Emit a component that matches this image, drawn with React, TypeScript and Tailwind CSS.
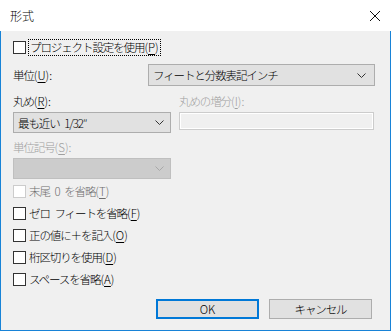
import React from "react";

const font = { fontFamily: '"Noto Sans CJK JP", "Noto Sans", sans-serif' };

const Key = ({ k }: { k: string }) => (
  <span className="tracking-[0px]">
    (<span className="underline underline-offset-[2px]">{k}</span>)
  </span>
);

const Chevron = ({ color = "#333" }: { color?: string }) => (
  <svg width="9" height="5" viewBox="0 0 9 5" className="shrink-0">
    <path d="M0.5 0.5 L4.5 4.5 L8.5 0.5" fill="none" stroke={color} strokeWidth="1" />
  </svg>
);

const Check = ({ disabled = false }: { disabled?: boolean }) => (
  <span
    className={
      "w-[13px] h-[13px] shrink-0 border bg-white " +
      (disabled ? "border-[#cccccc]" : "border-[#333333]")
    }
  />
);

const CheckRow = ({ label, k, disabled = false }: { label: string; k: string; disabled?: boolean }) => (
  <div className="h-[22px] flex items-center gap-[3px]">
    <Check disabled={disabled} />
    <span className={disabled ? "text-[#6d6d6d]" : "text-black"}>
      {label}
      <Key k={k} />
    </span>
  </div>
);

export default function App() {
  return (
    <div className="w-[391px] h-[331px] flex flex-col bg-[#f0f0f0] text-[11.5px] leading-[14px] text-black tracking-[-1.1px] font-light" style={font}>
      {/* title bar */}
      <div className="h-[31px] shrink-0 bg-white flex items-center justify-between pl-[10px] pr-[6px]">
        <span className="text-[12px] tracking-normal">形式</span>
        <svg width="10" height="10" viewBox="0 0 10 10" className="mr-[5px]">
          <path d="M0 0 L10 10 M10 0 L0 10" stroke="#111" strokeWidth="1" />
        </svg>
      </div>

      <div className="flex-1 flex flex-col border-x border-b border-[#1883d7] pl-[12px] pr-[15px] pt-[8px]">
        {/* project setting */}
        <div className="h-[17px] flex items-center gap-[2px]">
          <Check />
          <span className="border border-dotted border-black px-[1px] leading-[15px]">
            プロジェクト設定を使用<Key k="P" />
          </span>
        </div>

        {/* units */}
        <div className="mt-[8px] flex items-center justify-between">
          <span>
            単位<Key k="U" />:
          </span>
          <div className="w-[227px] h-[22px] bg-[#e1e1e1] border border-[#adadad] flex items-center justify-between pl-[4px] pr-[8px]">
            <span>フィートと分数表記インチ</span>
            <Chevron />
          </div>
        </div>

        {/* rounding */}
        <div className="mt-[8px] flex gap-[8px]">
          <div className="w-[158px] flex flex-col">
            <span className="h-[16px]">
              丸め<Key k="R" />:
            </span>
            <div className="mt-[2px] h-[21px] bg-[#e1e1e1] border border-[#adadad] flex items-center justify-between pl-[4px] pr-[6px]">
              <span>最も近い{"\u2002"}1/32″</span>
              <Chevron />
            </div>
            <span className="mt-[7px] h-[16px] text-[#a0a0a0]">
              単位記号<Key k="S" />:
            </span>
            <div className="mt-[2px] h-[21px] bg-[#cccccc] border border-[#bfbfbf] flex items-center justify-end pr-[6px]">
              <Chevron color="#a8a8a8" />
            </div>
          </div>
          <div className="w-[195px] flex flex-col">
            <span className="h-[16px] text-[#a0a0a0]">
              丸めの増分<Key k="I" />:
            </span>
            <div className="mt-[2px] h-[18px] bg-[#f0f0f0] border border-[#cccccc] shadow-[inset_0_0_0_1px_#ffffff]" />
          </div>
        </div>

        {/* options */}
        <div className="mt-[1px] flex flex-col">
          <CheckRow label={"末尾\u20020\u2002を省略"} k="T" disabled />
          <CheckRow label={"ゼロ\u2002フィートを省略"} k="F" />
          <CheckRow label="正の値に＋を記入" k="O" />
          <CheckRow label="桁区切りを使用" k="D" />
          <CheckRow label="スペースを省略" k="A" />
        </div>

        {/* buttons */}
        <div className="mt-[9px] flex justify-end gap-[10px] pr-[3px]">
          <button className="w-[103px] h-[20px] bg-[#e1e1e1] border-2 border-[#0078d7] flex items-center justify-center tracking-normal">
            OK
          </button>
          <button className="w-[103px] h-[20px] bg-[#e1e1e1] border border-[#adadad] flex items-center justify-center">
            キャンセル
          </button>
        </div>
      </div>
    </div>
  );
}
